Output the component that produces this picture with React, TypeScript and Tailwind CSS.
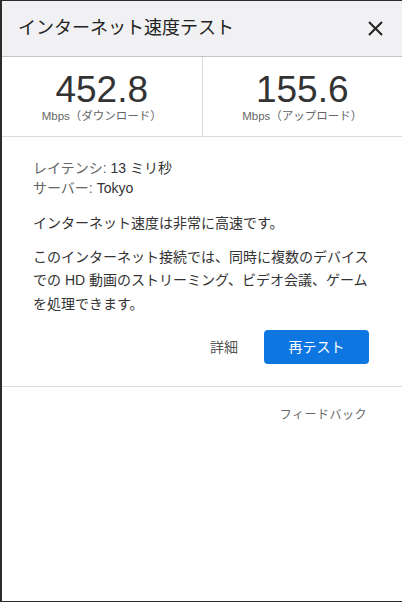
import React from 'react'

const FONT = { fontFamily: '"Liberation Sans", "Noto Sans CJK JP", sans-serif' }

function Stat({ value, label }: { value: string, label: string }) {
  return (
    <div className="flex-1 flex flex-col items-center pt-[14px]">
      <div className="text-[37px] leading-[38px] text-[#333]">{value}</div>
      <div className="text-[11.5px] leading-[14px] text-[#666] mt-0">{label}</div>
    </div>
  )
}

export default function App() {
  return (
    <div className="w-[402px] h-[602px] bg-[#2b2b2b] pt-px pl-[2px] pb-px flex" style={FONT}>
      <div className="flex-1 bg-white flex flex-col">
        <div className="h-[56px] bg-[#f1f1f3] border-b border-[#c4c4c4] flex items-center justify-between pl-[16px] pr-[19px]">
          <h1 className="text-[18px] text-[#222]">インターネット速度テスト</h1>
          <svg width="15" height="15" viewBox="0 0 15 15" className="text-[#222]">
            <path d="M1 1L14 14M14 1L1 14" stroke="currentColor" strokeWidth="2" />
          </svg>
        </div>

        <div className="flex h-[80px] border-b border-[#dcdcdc]">
          <Stat value="452.8" label="Mbps（ダウンロード）" />
          <div className="w-px bg-[#dcdcdc]" />
          <Stat value="155.6" label="Mbps（アップロード）" />
        </div>

        <div className="px-[31px] pt-[21px] text-[14px] text-[#333]">
          <div className="leading-[20px]">
            <div><span className="text-[#666]">レイテンシ: </span>13 ミリ秒</div>
            <div><span className="text-[#666]">サーバー: </span>Tokyo</div>
          </div>
          <p className="leading-[23.5px] mt-[14px]">インターネット速度は非常に高速です。</p>
          <p className="leading-[23.5px] mt-[10px] pr-[2px]">
            このインターネット接続では、同時に複数のデバイスでの HD 動画のストリーミング、ビデオ会議、ゲームを処理できます。
          </p>
          <div className="flex items-center justify-end gap-[26px] mt-[14px] pr-[2px]">
            <button className="text-[14px] text-[#555]">詳細</button>
            <button className="w-[105px] h-[34px] rounded-[4px] bg-[#0e76e0] text-white text-[14px]">再テスト</button>
          </div>
        </div>

        <div className="mt-[22px] border-t border-[#dcdcdc] flex justify-end pr-[35px] pt-[20px]">
          <span className="text-[12px] leading-[16px] text-[#666] tracking-[0.5px]">フィードバック</span>
        </div>
      </div>
    </div>
  )
}
